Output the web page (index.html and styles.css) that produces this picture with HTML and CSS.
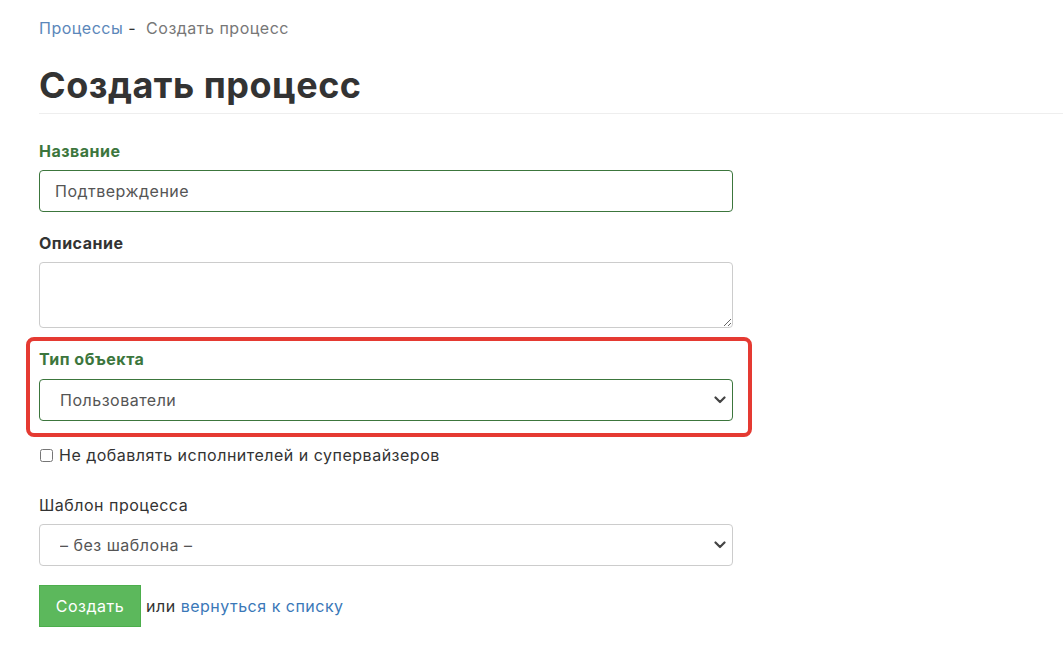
FILE: index.html
```html
<!DOCTYPE html>
<html lang="ru">
<head>
<meta charset="utf-8">
<title>Создать процесс</title>
<link rel="stylesheet" href="styles.css">
</head>
<body>
<div class="page">
  <nav class="breadcrumb"><a href="#" class="crumb-link">Процессы</a><span class="sep"> -  </span><span class="crumb-current">Создать процесс</span></nav>
  <h1 class="title">Создать процесс</h1>
  <form class="form">
    <div class="group group-name">
      <label class="label label-ok">Название</label>
      <input class="control control-ok" type="text" value="Подтверждение">
    </div>
    <div class="group group-desc">
      <label class="label">Описание</label>
      <textarea class="control textarea"></textarea>
    </div>
    <div class="group group-type highlighted">
      <label class="label label-ok">Тип объекта</label>
      <div class="select-wrap">
        <select class="control select control-ok"><option>Пользователи</option></select>
        <svg class="chevron" width="12" height="8" viewBox="0 0 12 8"><path d="M1.5 1.5 L6 6 L10.5 1.5" fill="none" stroke="#444" stroke-width="2.2" stroke-linecap="round" stroke-linejoin="round"/></svg>
      </div>
    </div>
    <div class="check-row">
      <input type="checkbox" class="checkbox" id="nousers"><label for="nousers" class="check-label">Не добавлять исполнителей и супервайзеров</label>
    </div>
    <div class="group group-tpl">
      <label class="label label-plain">Шаблон процесса</label>
      <div class="select-wrap">
        <select class="control select"><option>– без шаблона –</option></select>
        <svg class="chevron" width="12" height="8" viewBox="0 0 12 8"><path d="M1.5 1.5 L6 6 L10.5 1.5" fill="none" stroke="#444" stroke-width="2.2" stroke-linecap="round" stroke-linejoin="round"/></svg>
      </div>
    </div>
    <div class="actions">
      <button type="button" class="btn">Создать</button>
      <span class="or">или</span>
      <a href="#" class="back-link">вернуться к списку</a>
    </div>
  </form>
</div>
</body>
</html>
```
FILE: styles.css
```css
html, body {
  margin: 0;
  padding: 0;
  background: #fff;
}
body {
  font-family: Inter, "Open Sans", "Liberation Sans", sans-serif;
  font-size: 16px;
  letter-spacing: 0.5px;
  color: #333;
}
.page {
  padding: 16px 0 0 39px;
}
.breadcrumb {
  line-height: 24px;
  height: 24px;
}
.crumb-link {
  color: #5b87ba;
  text-decoration: none;
}
.sep {
  color: #333;
  white-space: pre;
}
.crumb-current {
  color: #777;
}
.title {
  margin: 23px 0 0 0;
  font-size: 36px;
  font-weight: 700;
  letter-spacing: 0.5px;
  line-height: 44px;
  height: 50px;
  border-bottom: 1px solid #eee;
  color: #333;
}
.form {
  width: 694px;
  margin-top: 26px;
}
.group {
  display: flex;
  flex-direction: column;
}
.label {
  font-weight: 700;
  line-height: 22px;
  margin-bottom: 8px;
  color: #333;
}
.label-ok {
  color: #3c763d;
}
.label-plain {
  font-weight: 400;
}
.control {
  box-sizing: border-box;
  width: 694px;
  height: 42px;
  border: 1px solid #ccc;
  border-radius: 4px;
  padding: 0 15px;
  font-family: inherit;
  font-size: 16px;
  letter-spacing: 0.5px;
  color: #555;
  background: #fff;
  outline: none;
}
.control-ok {
  border-color: #3c763d;
}
.group-desc {
  margin-top: 20px;
}
.textarea {
  height: 66px;
  padding: 8px 15px;
  display: block;
}
.group-type {
  margin-top: 20px;
}
.group-type .label {
  margin-bottom: 9px;
}
.highlighted {
  position: relative;
}
.highlighted::after {
  content: "";
  position: absolute;
  left: -13px;
  right: -19px;
  top: -11px;
  bottom: -16px;
  border: 4px solid #e53a32;
  border-radius: 8px;
  pointer-events: none;
}
.select-wrap {
  position: relative;
}
.select {
  appearance: none;
  -webkit-appearance: none;
  padding-left: 20px;
  display: block;
}
.chevron {
  position: absolute;
  right: 7px;
  top: 17px;
}
.check-row {
  display: flex;
  align-items: center;
  height: 22px;
  margin-top: 23px;
}
.checkbox {
  margin: 0 6px 0 1px;
  width: 13px;
  height: 13px;
}
.check-label {
  line-height: 22px;
  color: #333;
}
.group-tpl {
  margin-top: 28px;
}
.actions {
  margin-top: 19px;
  display: flex;
  align-items: center;
}
.btn {
  height: 42px;
  background: #5cb85c;
  border: 1px solid #4cae4c;
  color: #fff;
  font-family: inherit;
  font-size: 16px;
  letter-spacing: 0.5px;
  padding: 0 15px;
  border-radius: 0;
  width: 102px;
}
.or {
  margin-left: 5px;
  color: #333;
}
.back-link {
  margin-left: 5px;
  color: #3a78b8;
  text-decoration: none;
}
```
